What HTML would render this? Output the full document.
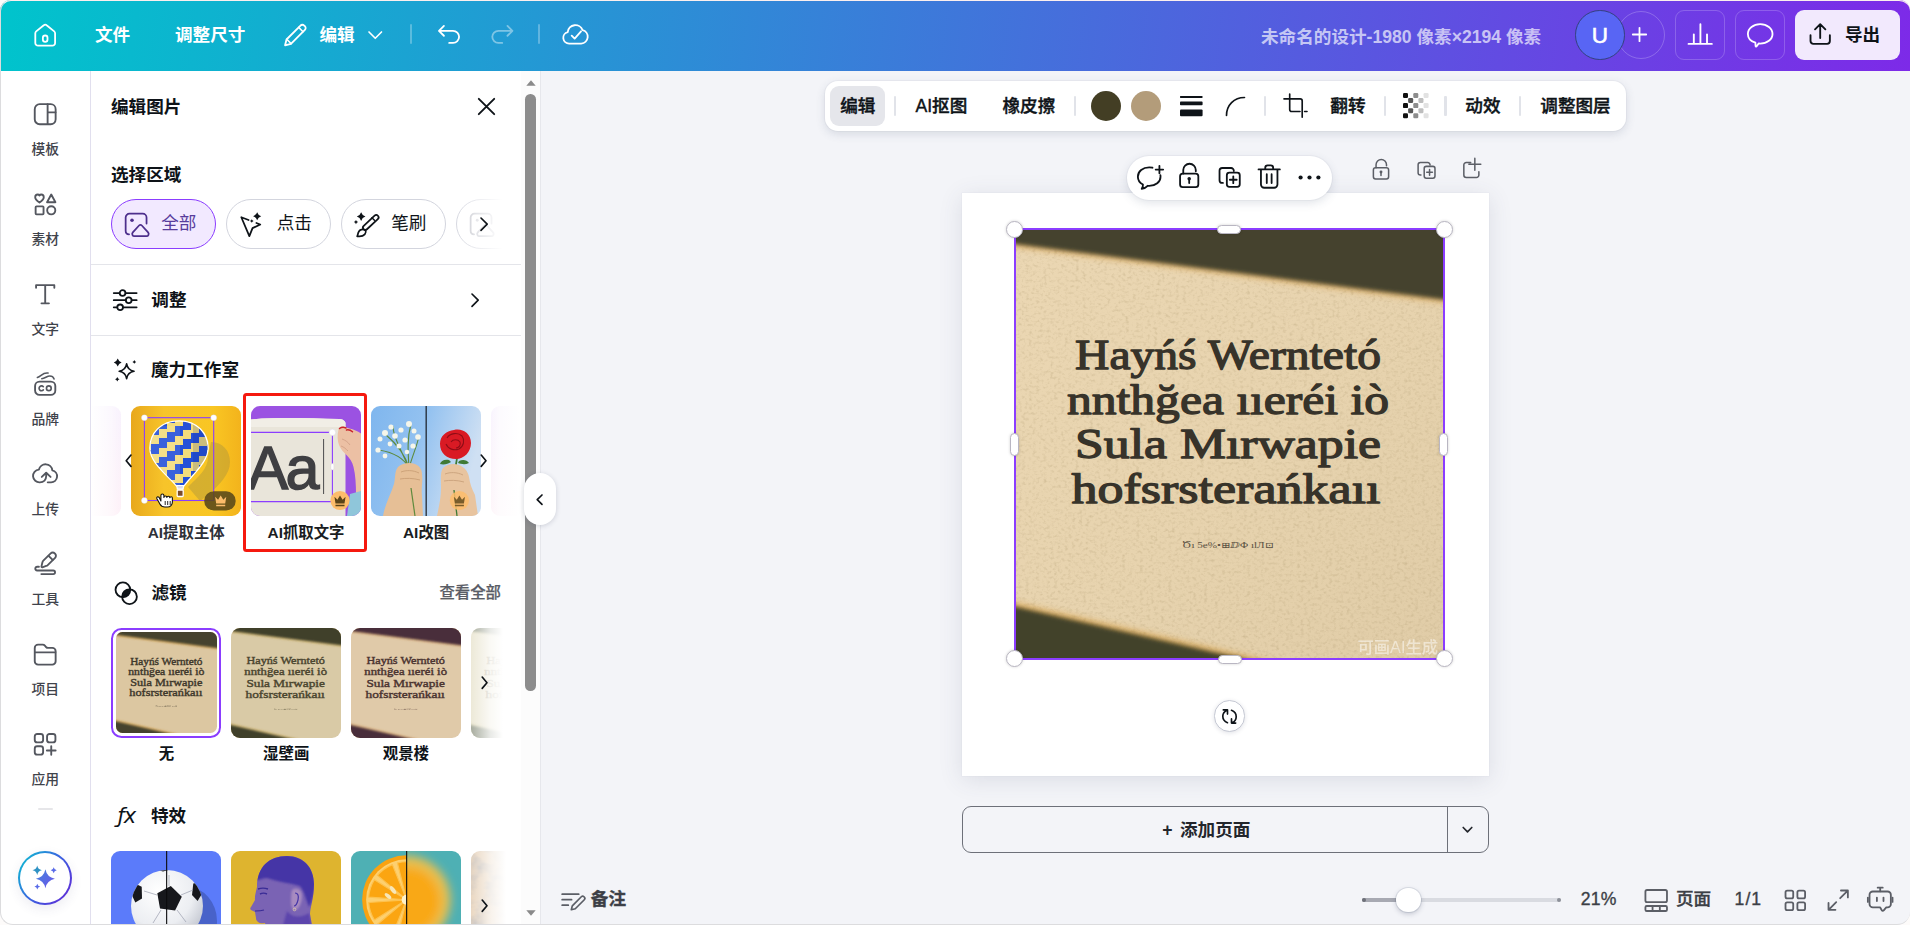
<!DOCTYPE html>
<html lang="zh-CN">
<head>
<meta charset="utf-8">
<title>未命名的设计 - 编辑图片</title>
<style>
*{box-sizing:border-box;margin:0;padding:0}
html,body{width:1910px;height:925px;overflow:hidden;background:#fbf7f6}
body{font-family:"Liberation Sans","Noto Sans CJK SC",sans-serif;color:#0e1318;position:relative}
.abs{position:absolute}
svg{display:block;overflow:visible}
#win{position:absolute;left:0;top:0;width:1910px;height:925px;overflow:hidden;background:#f3f4f8}
#winborder{z-index:10;position:absolute;left:0;top:0;width:1910px;height:925px;border-radius:11px 11px 13px 13px;border:1px solid #dcdcde;border-top-color:#fbefee;border-right:0;box-shadow:0 0 0 20px #fdfbfa;pointer-events:none}
/* header */
#hdr{z-index:3;position:absolute;left:0;top:0;width:1910px;height:70.5px;background:linear-gradient(97deg,#00c4cc 0%,#7d2ae8 100%)}
.ht{position:absolute;color:#fff;font-weight:700;font-size:17.6px;line-height:24px;white-space:nowrap;top:22.5px}
.hi{position:absolute;stroke:#fff;fill:none;stroke-width:1.65;stroke-linecap:round;stroke-linejoin:round}
.hdiv{position:absolute;top:24px;width:2px;height:20px;background:rgba(255,255,255,.28);border-radius:1px}
/* rail */
#rail{position:absolute;left:0;top:70.5px;width:90.5px;height:855px;background:#fff}
.rl{position:absolute;left:0;width:90.5px;text-align:center;font-size:13.8px;line-height:18px;color:#3f434b;font-weight:500}
.ri{position:absolute;stroke:#54575f;fill:none;stroke-width:1.7;stroke-linecap:round;stroke-linejoin:round}
/* panel */
#panel{position:absolute;left:90px;top:70px;width:432px;height:855px;background:#fff;border-left:1px solid #e1dfee;overflow:hidden}
#panel>*{margin-left:-91px;margin-top:-70px}
.pt{position:absolute;font-weight:700;font-size:17.6px;line-height:24px;white-space:nowrap;color:#0e1318}
.pi{position:absolute;stroke:#0e1318;fill:none;stroke-width:1.65;stroke-linecap:round;stroke-linejoin:round}
.hr{position:absolute;left:0;width:430px;height:1px;background:#e4e5ea}
.pill{position:absolute;top:199.25px;width:104.75px;height:49.5px;border-radius:25px;border:1.2px solid #d3d5de;background:#fff}
.pill span{position:absolute;left:49.5px;top:10.4px;font-size:17.6px;line-height:24px;color:#0e1318;white-space:nowrap}
.pill svg{position:absolute;left:12.3px;top:11.6px;stroke:#0e1318;fill:none;stroke-width:1.6;stroke-linecap:round;stroke-linejoin:round}
.card{position:absolute;width:110px;height:110px;border-radius:9px;overflow:hidden}
.cl{position:absolute;font-size:15.4px;font-weight:700;line-height:20px;text-align:center;width:130px;color:#1a1d22;white-space:nowrap}
/* scrollbar */
#sb{position:absolute;left:521px;top:70.5px;width:19.5px;height:855px;background:#fcfcfc;border-right:1px solid #e6e7ec}
/* canvas */
.tb{position:absolute;background:#fff;box-shadow:0 0 0 1px rgba(64,79,109,.04),0 3px 10px rgba(64,79,109,.16)}
.tt{position:absolute;font-size:17.6px;font-weight:500;line-height:24px;white-space:nowrap;color:#0e1318;top:13px;-webkit-text-stroke:.4px #0e1318}
.tdiv{position:absolute;top:15.3px;width:2.2px;height:19.5px;background:#e1e3e9;border-radius:1.1px;margin-left:-.4px}
.ti{position:absolute;stroke:#0e1318;fill:none;stroke-width:1.65;stroke-linecap:round;stroke-linejoin:round}
.gi{position:absolute;stroke:#5b5e66;fill:none;stroke-width:1.65;stroke-linecap:round;stroke-linejoin:round}
.hnd{position:absolute;width:17px;height:17px;border-radius:50%;background:#fff;border:1px solid #b9b6c2;box-shadow:0 0 3px rgba(0,0,0,.18)}
.hp{position:absolute;background:#fff;border:1px solid #b9b6c2;border-radius:5px;box-shadow:0 0 3px rgba(0,0,0,.18)}
.bt{position:absolute;font-size:17.6px;font-weight:500;line-height:24px;white-space:nowrap;color:#3c3f46;top:887.3px;-webkit-text-stroke:.35px #3c3f46}
</style>
</head>
<body>
<div id="win">
<!--HEADER-->
<div id="hdr">
<svg class="hi" style="left:31.8px;top:21.6px" width="26.4" height="26.4" viewBox="0 0 24 24"><path d="M3 10.2c0-.7.3-1.3.8-1.7l6.9-5.6a2 2 0 0 1 2.6 0l6.9 5.6c.5.4.8 1 .8 1.7V19a2.5 2.5 0 0 1-2.5 2.500h-13A2.500 2.500 0 0 1 3 19z"/><rect x="9.900" y="12.300" width="4.200" height="5.800" rx="2.100"/></svg>
<div class="ht" style="left:95px">文件</div>
<div class="ht" style="left:175px">调整尺寸</div>
<svg class="hi" style="left:282.2px;top:21.600px" width="26.4" height="26.4" viewBox="0 0 24 24"><path d="M2.800 21.200l1.300-5.300L16.800 3.200a2.400 2.400 0 0 1 3.400 0l.6.600a2.400 2.400 0 0 1 0 3.400L8.100 19.900z"/><path d="M4.300 15.700l4 4M15.200 4.900l3.900 3.900" stroke-width="1.400"/></svg>
<div class="ht" style="left:319.5px">编辑</div>
<svg class="hi" style="left:367.5px;top:31px" width="14.5" height="8.5" viewBox="0 0 14.5 8.5"><path d="M1 1l6.250 6.250L13.500 1"/></svg>
<div class="hdiv" style="left:410.2px"></div>
<svg class="hi" style="left:435.5px;top:21.500px" width="26.4" height="26.4" viewBox="0 0 24 24"><path d="M7.200 3.500L2.700 8l4.500 4.500M3 8h12.500a5.500 5.500 0 0 1 0 11H12"/></svg>
<svg class="hi" style="left:488.500px;top:21.500px;opacity:.42" width="26.4" height="26.4" viewBox="0 0 24 24"><path d="M16.800 3.500L21.300 8l-4.500 4.500M21 8H8.500a5.500 5.500 0 0 0 0 11H12"/></svg>
<div class="hdiv" style="left:537.8px"></div>
<svg class="hi" style="left:561.8px;top:21.300px" width="26.4" height="26.4" viewBox="0 0 24 24"><path d="M6.500 20.500a5.300 5.300 0 0 1-1.300-10.450A7 7 0 0 1 18.700 8.300 6.200 6.200 0 0 1 17.500 20.500z"/><path d="M8.800 13.300l2.700 2.700 5.800-6.600"/></svg>
<div class="ht" style="left:1261px;top:24.5px;color:rgba(255,255,255,.68)">未命名的设计-1980 像素×2194 像素</div>
<div class="abs" style="left:1616.800px;top:10.800px;width:48px;height:48px;border-radius:50%;border:1px solid rgba(255,255,255,.22)"></div>
<svg class="hi" style="left:1632.200px;top:27.300px" width="15" height="15" viewBox="0 0 15 15"><path d="M7.500 .8v13.400M.8 7.500h13.400" stroke-width="1.800"/></svg>
<div class="abs" style="left:1575px;top:10px;width:49.500px;height:49.500px;border-radius:50%;background:#5865f4;border:1px solid #33407e;color:#fff;font-size:22.500px;font-weight:400;-webkit-text-stroke:.55px #fff;line-height:49px;text-align:center">U</div>
<div class="abs" style="left:1675px;top:10px;width:50px;height:50px;border-radius:9px;border:1px solid rgba(255,255,255,.2)"></div>
<svg class="hi" style="left:1686.800px;top:21.800px" width="26.4" height="26.4" viewBox="0 0 24 24"><path d="M1.400 19.900h21.200M6.200 19.500V11.200M12.200 19.500V2M18.200 19.500V11.200" stroke-width="1.700"/></svg>
<div class="abs" style="left:1734.800px;top:10px;width:50px;height:50px;border-radius:9px;border:1px solid rgba(255,255,255,.2)"></div>
<svg class="hi" style="left:1747px;top:21.600px" width="26.4" height="26.4" viewBox="0 0 24 24"><path d="M12 2c6.200 0 11.200 3.900 11.200 8.800S18.200 19.600 12 19.600c-.5 0-.9 0-1.400-.1l-1.800 2.600c-.3.400-1 .3-1-.3L7.600 18.800C3.600 17.500.8 14.400.8 10.800.8 5.900 5.800 2 12 2z"/></svg>
<div class="abs" style="left:1795px;top:10px;width:105px;height:50px;border-radius:9px;background:#f2e9fd"></div>
<svg class="hi" style="left:1807px;top:21px;stroke:#0e1318" width="26.4" height="26.4" viewBox="0 0 24 24"><path d="M12 15.500V3.200M7.300 7.600L12 2.900l4.700 4.700M3.200 13v5.300a2.500 2.500 0 0 0 2.500 2.500h12.600a2.500 2.500 0 0 0 2.500-2.500V13" stroke-width="1.700"/></svg>
<div class="ht" style="left:1845px;color:#0e1318">导出</div>
</div>
<!--RAIL-->
<div id="rail">
<div class="rl" style="top:70.4px">模板</div>
<div class="rl" style="top:160.5px">素材</div>
<div class="rl" style="top:250.5px">文字</div>
<div class="rl" style="top:340.6px">品牌</div>
<div class="rl" style="top:430.6px">上传</div>
<div class="rl" style="top:520.7px">工具</div>
<div class="rl" style="top:610.8px">项目</div>
<div class="rl" style="top:700.8px">应用</div>

<svg class="ri" style="left:31.8px;top:30.05px" width="26.4" height="26.4" viewBox="0 0 24 24"><rect x="2.500" y="2.900" width="19" height="18.200" rx="4.500"/><path d="M14.200 3v18M14.200 10.300h7.200"/></svg>
<svg class="ri" style="left:31.8px;top:120.50px" width="26.4" height="26.4" viewBox="0 0 24 24"><path d="M6.800 10.500C4.500 8.900 2.900 7.500 2.900 5.600c0-1.400 1.100-2.400 2.300-2.400.7 0 1.300.4 1.600.9.300-.5.900-.9 1.600-.9 1.200 0 2.300 1 2.300 2.400 0 1.900-1.600 3.300-3.900 4.900z"/><path d="M17.500 3.200l3.800 7h-7.600z"/><rect x="3.300" y="14" width="7.200" height="7.200" rx=".8"/><circle cx="17.500" cy="17.600" r="3.700"/></svg>
<svg class="ri" style="left:31.8px;top:210.20px" width="26.4" height="26.4" viewBox="0 0 24 24"><path d="M3.700 6.200V3.800h16.600v2.400M12 3.800v16.400M8.600 20.300h6.800"/></svg>
<svg class="ri" style="left:31.8px;top:300.80px" width="26.4" height="26.4" viewBox="0 0 24 24"><rect x="2.800" y="9.700" width="18.400" height="12" rx="4"/><path d="M4.900 5.900C8.500 4.700 9.800 1.100 14.600 1.900M8.900 7c3-.4 4.800-2.500 7.300-2.500 2 0 3.400 1.300 3.900 2.700" stroke-width="1.400"/><path d="M10.300 14.300a2.200 2.200 0 1 0 0 2.900" stroke-width="1.500"/><circle cx="15.300" cy="15.700" r="2.150" stroke-width="1.500"/></svg>
<svg class="ri" style="left:31.800px;top:389.20px" width="26.4" height="26.4" viewBox="0 0 24 24"><path d="M14.300 20.300h3a5.500 5.500 0 0 0 1.200-10.870A6.200 6.200 0 0 0 6.300 8.700a5.800 5.800 0 0 0 .9 11.600c3.500 0 5.700-2.300 5.700-5.800v-2.500"/><path d="M8.900 15.400l4-3.800 4 3.800"/></svg>
<svg class="ri" style="left:31.8px;top:479.50px" width="26.400" height="26.400" viewBox="0 0 24 24"><path d="M9.400 15.700c-.5.100-.9-.3-.8-.8l.9-3.800a3 3 0 0 1 .8-1.400L17 3.100a2.600 2.600 0 0 1 3.700 0l.3.300a2.600 2.600 0 0 1 0 3.700l-6.700 6.600a3 3 0 0 1-1.400.800z"/><path d="M15.100 5.300l3.700 3.700"/><path d="M6.300 15.200H4.700a1.700 1.700 0 0 0 0 3.400h14.600a1.650 1.650 0 0 1 0 3.300H8.500"/></svg>
<svg class="ri" style="left:31.8px;top:570.20px" width="26.400" height="26.400" viewBox="0 0 24 24"><path d="M2.500 6.300a3 3 0 0 1 3-3h4.200c.8 0 1.500.3 2 .9l1.300 1.500c.4.400.9.600 1.400.600H18.500a3 3 0 0 1 3 3v9.200a3 3 0 0 1-3 3h-13a3 3 0 0 1-3-3z"/><path d="M2.800 10.300h18.400"/></svg>
<svg class="ri" style="left:31.8px;top:660.90px" width="26.400" height="26.400" viewBox="0 0 24 24"><rect x="2.500" y="2.700" width="7.600" height="7.600" rx="2.200"/><rect x="13.700" y="2.700" width="7.600" height="7.600" rx="2.200"/><rect x="2.500" y="13.900" width="7.600" height="7.600" rx="2.200"/><path d="M17.500 13.700v8M13.500 17.700h8"/></svg>
<div class="abs" style="left:38px;top:737.00px;width:14.800px;height:2.600px;border-radius:1.300px;background:#e6e6e9"></div>
<div class="abs" style="left:18.200px;top:780.40px;width:54px;height:54px;border-radius:50%;background:linear-gradient(125deg,#0fb8d2 8%,#3a62e0 50%,#6228d6 95%);box-shadow:0 4px 12px rgba(60,60,110,.09)"><div class="abs" style="left:1.900px;top:1.900px;width:50.200px;height:50.200px;border-radius:50%;background:#fff"></div>
<svg class="abs" style="left:0;top:0" width="54" height="54" viewBox="0 0 54 54"><defs><linearGradient id="mg" x1="0" y1="0" x2="1" y2="1"><stop offset="0" stop-color="#3f86dc"/><stop offset="1" stop-color="#6f52ea"/></linearGradient></defs><path fill="url(#mg)" d="M27.4 18.20Q28.92 26.18 36.90 27.7Q28.92 29.22 27.4 37.20Q25.88 29.22 17.90 27.7Q25.88 26.18 27.4 18.20z"/><path fill="#2f92c4" d="M19.2 14.60Q19.95 18.55 23.90 19.3Q19.95 20.05 19.2 24.00Q18.45 20.05 14.50 19.3Q18.45 18.55 19.2 14.60z"/><path fill="#5a6ce8" d="M35.7 16.30Q36.18 18.82 38.70 19.3Q36.18 19.78 35.7 22.30Q35.22 19.78 32.70 19.3Q35.22 18.82 35.7 16.30zM19.3 32.70Q19.76 35.14 22.20 35.6Q19.76 36.06 19.3 38.50Q18.84 36.06 16.40 35.6Q18.84 35.14 19.3 32.70z"/></svg></div>
</div>
<!--PANEL-->
<div id="panel">
<div class="pt" style="left:111px;top:95.100px">编辑图片</div>
<svg class="pi" style="left:477.5px;top:97.500px" width="17" height="17" viewBox="0 0 17 17"><path d="M.8.800l15.400 15.400M16.200.800L.800 16.200" stroke-width="1.900"/></svg>
<div class="pt" style="left:111px;top:162.600px">选择区域</div>
<div class="pill" style="left:110.75px;background:#f2e9ff;border:1.4px solid #8b3dff"><svg width="26.4" height="26.4" viewBox="0 0 24 24" style="stroke:#4d2f8c"><path d="M4.600 20.400A3.400 3.400 0 0 1 1.500 17V5a3.500 3.500 0 0 1 3.500-3.500h12A3.500 3.500 0 0 1 20.500 5v5.500"/><circle cx="7.300" cy="7.400" r="1.600" fill="#4d2f8c" stroke="none"/><path d="M13.700 12.300a1.700 1.700 0 0 1 2.500 0l5.700 6.200a2.100 2.100 0 0 1-1.500 3.500H9.500A2.100 2.100 0 0 1 8 18.500z"/></svg><span style="color:#583c9c">全部</span></div>
<div class="pill" style="left:226.25px"><svg width="26.4" height="26.4" viewBox="0 0 24 24"><path d="M7.800 7.300L1.200 4.800 8.500 22l2.900-7.300 7-3.300-3.500-1.400"/><path d="M15.6 0.13Q16.48 2.92 19.27 3.8Q16.48 4.68 15.6 7.47Q14.72 4.68 11.93 3.8Q14.72 2.92 15.6 0.13zM10.7 6.58Q11.09 7.81 12.32 8.2Q11.09 8.59 10.7 9.82Q10.31 8.59 9.08 8.2Q10.31 7.81 10.7 6.58z" fill="#0e1318" stroke="none"/></svg><span>点击</span></div>
<div class="pill" style="left:340.75px"><svg width="26.4" height="26.4" viewBox="0 0 24 24"><rect x="13.100" y=".6" width="4.300" height="17.800" rx="2.150" transform="rotate(47 15.250 9.500)"/><path d="M16.300 5.200l2.300 2.400" stroke-width="1.300"/><path d="M8.300 15.700c-2.300 0-3.900 1.200-4.500 3.400-.3 1.200-.5 2.200-.9 3 2.600.4 5.400 0 6.900-1.700 1.100-1.300 1.200-2.600.7-3.600z"/><path d="M6.5 0.31Q7.43 3.27 10.39 4.2Q7.43 5.13 6.5 8.09Q5.57 5.13 2.61 4.2Q5.57 3.27 6.5 0.31zM1.8 7.26Q2.27 8.73 3.74 9.2Q2.27 9.67 1.8 11.14Q1.33 9.67 -0.14 9.2Q1.33 8.73 1.8 7.26z" fill="#0e1318" stroke="none"/></svg><span>笔刷</span></div>
<div class="pill" style="left:455.75px"><svg width="26.4" height="26.4" viewBox="0 0 24 24" style="stroke:#bfc1c9"><path d="M4.600 20.400A3.400 3.400 0 0 1 1.500 17V5a3.500 3.500 0 0 1 3.500-3.500h12A3.500 3.500 0 0 1 20.500 5v5.500"/><circle cx="7.500" cy="7.500" r="1.300" fill="#c9cad1" stroke="none"/><path d="M13.700 12.300a1.700 1.700 0 0 1 2.500 0l5.700 6.200a2.100 2.100 0 0 1-1.500 3.500H9.500A2.100 2.100 0 0 1 8 18.500z"/></svg></div>
<div class="abs" style="left:452px;top:195px;width:70px;height:58px;background:linear-gradient(90deg,rgba(255,255,255,0) 0,rgba(255,255,255,.55) 35%,#fff 72%)"></div>
<svg class="pi" style="left:479.800px;top:216.800px" width="8.2" height="14.4" viewBox="0 0 8.2 14.4" stroke-width="1.900"><path d="M1 1l6.200 6.200L1 13.400"/></svg>
<div class="hr" style="left:91px;top:264px"></div>
<svg class="pi" style="left:112.300px;top:286.800px" width="26.4" height="26.4" viewBox="0 0 24 24"><path d="M1.600 5.500h5.200M12.400 5.500h10M1.600 12h10.800M18 12h4.400M1.600 18.500h3M10.200 18.500h12.200"/><circle cx="9.600" cy="5.500" r="2.600"/><circle cx="15.200" cy="12" r="2.600"/><circle cx="7.400" cy="18.500" r="2.600"/></svg>
<div class="pt" style="left:151.300px;top:287.800px">调整</div>
<svg class="pi" style="left:471.300px;top:293.400px" width="8.2" height="14.4" viewBox="0 0 8.2 14.4" stroke-width="1.800"><path d="M1 1l6.200 6.200L1 13.400"/></svg>
<div class="hr" style="left:91px;top:334.700px"></div>
<svg class="pi" style="left:112.300px;top:357.300px" width="26.4" height="26.4" viewBox="0 0 24 24"><path d="M13.300 6.300c.7 4.300 2.400 6 6.700 6.700-4.300.7-6 2.400-6.700 6.700-.7-4.300-2.400-6-6.700-6.700 4.300-.7 6-2.400 6.700-6.700z" stroke-width="1.500"/><path d="M5.2 1.44Q6.06 4.14 8.76 5Q6.06 5.86 5.2 8.56Q4.34 5.86 1.64 5Q4.34 4.14 5.2 1.44zM20.3 2.77Q20.71 4.09 22.03 4.5Q20.71 4.91 20.3 6.23Q19.89 4.91 18.57 4.5Q19.89 4.09 20.3 2.77zM4.8 18.25Q5.29 19.81 6.85 20.3Q5.29 20.79 4.8 22.35Q4.31 20.79 2.75 20.3Q4.31 19.81 4.8 18.25z" fill="#0e1318" stroke="none"/></svg>
<div class="pt" style="left:151px;top:358.300px">魔力工作室</div>
<!--MAGIC0--><div class="abs" style="left:91px;top:405.900px;width:30px;height:110px;border-radius:0 9px 9px 0;background:linear-gradient(180deg,#f7effd,#fdeef6)"></div>
<div class="abs" style="left:491.400px;top:405.900px;width:31px;height:110px;border-radius:9px 0 0 9px;background:linear-gradient(180deg,#f7f1fd,#fdf3f8)"></div>
<svg class="card" style="left:131.200px;top:405.900px" width="110" height="110" viewBox="0 0 110 110">
<defs><linearGradient id="yg" x1="0" y1="0" x2="1" y2="0"><stop offset="0" stop-color="#e8a81c"/><stop offset=".3" stop-color="#f7c42a"/><stop offset=".75" stop-color="#f9c623"/><stop offset="1" stop-color="#f3b31c"/></linearGradient></defs>
<rect width="110" height="110" fill="url(#yg)"/>
<path d="M80 36c12 0 19 9 19 20 0 12-10 22-22 33l-8 6-12-14c10-10 20-18 20-30z" fill="#a8923f" opacity=".42"/>
<rect x="13.400" y="11.700" width="69.300" height="82.800" fill="none" stroke="#8b3dff" stroke-width="1.100"/>
<clipPath id="bc"><path d="M48 15.500C30 15.500 19.500 28 19.500 42c0 13 14 24 26.500 37.500h6.500C63 66 76.500 55 76.500 42 76.500 28 66 15.500 48 15.500z"/></clipPath><path d="M48 15.500C30 15.500 19.500 28 19.500 42c0 13 14 24 26.500 37.500h6.500C63 66 76.500 55 76.500 42 76.500 28 66 15.500 48 15.500z" fill="#fff" stroke="#fff" stroke-width="2.600" stroke-linejoin="round"/><g clip-path="url(#bc)"><rect x="15" y="10" width="66" height="75" fill="#f3dc7c"/><path d="M12 6h8v-6h8v-6h8v-6h8v-6h8v-6h8v-6h8v-6h8v-6h8v-6v10v6h-8v6h-8v6h-8v6h-8v6h-8v6h-8v6h-8v6h-8v6h-8z" fill="#2450d8"/><path d="M12 25h8v-6h8v-6h8v-6h8v-6h8v-6h8v-6h8v-6h8v-6h8v-6v10v6h-8v6h-8v6h-8v6h-8v6h-8v6h-8v6h-8v6h-8v6h-8z" fill="#2450d8"/><path d="M12 44h8v-6h8v-6h8v-6h8v-6h8v-6h8v-6h8v-6h8v-6h8v-6v10v6h-8v6h-8v6h-8v6h-8v6h-8v6h-8v6h-8v6h-8v6h-8z" fill="#2450d8"/><path d="M12 63h8v-6h8v-6h8v-6h8v-6h8v-6h8v-6h8v-6h8v-6h8v-6v10v6h-8v6h-8v6h-8v6h-8v6h-8v6h-8v6h-8v6h-8v6h-8z" fill="#2450d8"/><path d="M12 82h8v-6h8v-6h8v-6h8v-6h8v-6h8v-6h8v-6h8v-6h8v-6v10v6h-8v6h-8v6h-8v6h-8v6h-8v6h-8v6h-8v6h-8v6h-8z" fill="#2450d8"/><path d="M12 101h8v-6h8v-6h8v-6h8v-6h8v-6h8v-6h8v-6h8v-6h8v-6v10v6h-8v6h-8v6h-8v6h-8v6h-8v6h-8v6h-8v6h-8v6h-8z" fill="#2450d8"/><path d="M12 120h8v-6h8v-6h8v-6h8v-6h8v-6h8v-6h8v-6h8v-6h8v-6v10v6h-8v6h-8v6h-8v6h-8v6h-8v6h-8v6h-8v6h-8v6h-8z" fill="#2450d8"/><path d="M12 139h8v-6h8v-6h8v-6h8v-6h8v-6h8v-6h8v-6h8v-6h8v-6v10v6h-8v6h-8v6h-8v6h-8v6h-8v6h-8v6h-8v6h-8v6h-8z" fill="#2450d8"/><path d="M19 20h30v65H19z" fill="#fff" opacity=".10"/><path d="M62 15h20v70H62z" fill="#102a80" opacity=".18"/></g><path d="M45.800 79.500h6.800l-.5 3.500h-5.800z" fill="#d9dbe8" stroke="#fff" stroke-width="1.200"/><rect x="46.200" y="84" width="6" height="6.500" rx=".8" fill="#7a4b2a" stroke="#fff" stroke-width="1.300"/>
<g fill="#fff" stroke="#c9c3d6" stroke-width=".3"><circle cx="13.400" cy="11.700" r="3"/><circle cx="82.700" cy="11.700" r="3"/><circle cx="13.400" cy="94.500" r="3"/></g>
<rect x="73.200" y="85.300" width="31.500" height="19.200" rx="9.600" fill="#59481a" opacity=".88"/>
<path transform="translate(89.700 94.300) scale(1.050)" d="M-5.300 -3.300L-2.500 -.6 0 -4.600 2.500 -.6 5.300 -3.300 4.300 3H-4.300zM-4.300 4.200H4.300V5.600H-4.300z" fill="#fdbd6b"/>
<g transform="translate(34.700 93.500)"><path d="M-6.500 -2c-1.500-1.500-3-.5-2.300 1.200l3 5.300c1 2 2.800 3 5 3h2.500c3 0 5-2 5-5V-1.500c0-1.600-2.300-1.800-2.600-.2 0-2-2.700-2.200-2.900-.3 0-2.100-2.900-2.100-3 0V-4c0-2-3-2-3 0V1.500z" fill="#fff" stroke="#111" stroke-width="1.100" stroke-linejoin="round"/><path d="M-.5 1.500v4M2 1.500v4M4.500 1.500v4" stroke="#111" stroke-width=".9" fill="none"/></g>
</svg>
<svg class="card" style="left:251px;top:405.900px" width="110" height="110" viewBox="0 0 110 110">
<rect width="110" height="110" fill="#9b52e2"/>
<path d="M0 13.500C25 11 60 12.500 88 13c3 0 6 1.500 6.500 4V110H0z" fill="#e9e5da"/>
<path d="M0 13.500C25 11 60 12.500 88 13c3 0 6 1.500 6.500 4v4H0z" fill="#f1eee6"/>
<text x="-3.500" y="82.500" font-family="'Liberation Sans',sans-serif" font-size="61" letter-spacing="-2.800" fill="#3f3f42" stroke="#3f3f42" stroke-width="1.500">Aa</text>
<path d="M72.600 33V88" stroke="#4a4a4c" stroke-width="1"/>
<path d="M0 26.400H81.400V95.600H0" fill="none" stroke="#8b3dff" stroke-width="1.100"/>
<path d="M87.500 23.500c1-3 4-3.500 6-2.500l5 1.500c4 1 8 2.500 11.500 5V90l-5-1c0-10-.5-20-2.500-28-1-5-4-9-7-12-3-3-6-6-7.500-10-1.500-4-2-10-.5-15.500z" fill="#ecc0a4"/>
<path d="M91 33c3 1 6 3 8 6M90 40c3 1 5 3 7 5" stroke="#cf9d84" stroke-width=".8" fill="none"/>
<path d="M88.500 22.500c2-1.500 4.500-1.500 6.500-.5M95.500 24c2.500-.5 4.500.5 6 1.800" stroke="#c9242c" stroke-width="1.500" fill="none" stroke-linecap="round"/>
<path d="M99 88l11-3v25H96z" fill="#8fc6da"/>
<circle cx="81.400" cy="26.400" r="3.300" fill="#fff" stroke="#cfcbd8" stroke-width=".4"/>
<rect x="80" y="57.500" width="2.800" height="6.500" rx="1.400" fill="#fff" stroke="#cfcbd8" stroke-width=".3"/>
<circle cx="89" cy="94.500" r="9.600" fill="#fdbd6b"/>
<path transform="translate(89 94.300) scale(1.050)" d="M-5.300 -3.300L-2.500 -.6 0 -4.600 2.500 -.6 5.300 -3.300 4.300 3H-4.300zM-4.300 4.200H4.300V5.600H-4.300z" fill="#5a4418"/>
</svg>
<svg class="card" style="left:371.100px;top:405.900px" width="110" height="110" viewBox="0 0 110 110">
<defs><linearGradient id="sky" x1="0" y1="0" x2="1" y2=".3"><stop offset="0" stop-color="#7fb6ee"/><stop offset=".5" stop-color="#94c2f0"/><stop offset="1" stop-color="#cfe0f3"/></linearGradient>
<filter id="fb1"><feGaussianBlur stdDeviation=".7"/></filter></defs>
<rect width="110" height="110" fill="url(#sky)"/>
<g stroke="#5d8a3c" stroke-width="1.100" fill="none"><path d="M38 62C34 48 26 38 14 28M38 62C37 46 36 32 40 18M38 62C32 50 20 46 8 44M38 62C42 48 46 40 48 30M38 62C30 44 22 30 22 20"/></g>
<g fill="#f6f6ea" filter="url(#fb1)"><circle cx="14" cy="27" r="3"/><circle cx="9" cy="33" r="2.500"/><circle cx="20" cy="21" r="2.600"/><circle cx="24" cy="30" r="2.800"/><circle cx="7" cy="44" r="2.600"/><circle cx="14" cy="50" r="2.400"/><circle cx="30" cy="24" r="2.600"/><circle cx="38" cy="18" r="3"/><circle cx="43" cy="25" r="2.500"/><circle cx="47" cy="31" r="2.800"/><circle cx="34" cy="34" r="2.600"/><circle cx="28" cy="40" r="2.500"/><circle cx="42" cy="40" r="2.600"/><circle cx="19" cy="38" r="2.400"/><circle cx="36" cy="46" r="2.300"/></g>
<path d="M27 61c4-4 12-5 17-3 4 1.500 7 5 7 10 1 8-1 14 0 22l1 20H12c2-12 8-22 11-32 1.500-6 .5-13 4-17z" fill="#e6bf96"/>
<path d="M30 66c5-2 12-2 18 1M29 73c6-1 13-1 20 1" stroke="#c99f76" stroke-width=".9" fill="none"/>
<path d="M40 82l4 28" stroke="#5d8a3c" stroke-width="1.200"/>
<path d="M86 52c-1 8-3 14-3 24" stroke="#3f7a35" stroke-width="1.800" fill="none"/>
<path d="M78 54c-5-1-8 1-9 4 4 1 8 0 11-2zM88 55c4-2 8-1 10 2-4 2-8 1-11 0z" fill="#3f7a35"/>
<path d="M83 24c8-2 17 3 17 13 0 9-7 16-15 16-9 0-16-6-16-15 0-8 6-13 14-14z" fill="#d91a24"/>
<path d="M76 32c3-5 11-6 15-2 3 4 2 10-3 13-5 2-11 0-13-5M80 36c2-3 7-3 9 0 1 3-1 6-4 6" stroke="#8f0d16" stroke-width="1.100" fill="none"/>
<path d="M72 62c4-4 11-5 16-3 5 2 9 6 10 12 1 7 3 12 6 18l3 21H66c2-10 4-18 4-28 0-7-1-16 2-20z" fill="#e8c49f"/>
<path d="M74 68c5-2 12-2 18 1M73 75c6-1 13-1 20 1" stroke="#c9a27c" stroke-width=".9" fill="none"/>
<path d="M83 84l3 26" stroke="#3f7a35" stroke-width="1.300"/>
<rect x="54.600" y="0" width="1.100" height="110" fill="#0b0b0d"/>
<circle cx="88.400" cy="94.500" r="9.600" fill="#fdbd6b" opacity=".85"/>
<path transform="translate(88.400 94.300) scale(1.050)" d="M-5.300 -3.300L-2.500 -.6 0 -4.600 2.500 -.6 5.300 -3.300 4.300 3H-4.300zM-4.300 4.200H4.300V5.600H-4.300z" fill="#6a5223" opacity=".9"/>
</svg>
<div class="abs" style="left:91px;top:400px;width:34px;height:122px;background:linear-gradient(90deg,#fff 0,rgba(255,255,255,.55) 60%,rgba(255,255,255,0) 100%)"></div>
<div class="abs" style="left:487px;top:400px;width:36px;height:122px;background:linear-gradient(90deg,rgba(255,255,255,0) 0,rgba(255,255,255,.7) 35%,#fff 90%)"></div>
<svg class="pi" style="left:125.3px;top:454.2px" width="7.200" height="13.400" viewBox="0 0 7.200 13.400" stroke-width="1.900"><path d="M6 1L1.200 6.700 6 12.400"/></svg>
<svg class="pi" style="left:480.3px;top:454.2px" width="7.200" height="13.400" viewBox="0 0 7.200 13.400" stroke-width="1.900"><path d="M1.200 1L6 6.700 1.200 12.400"/></svg>
<div class="cl" style="left:121.200px;top:522.600px;color:#2e3138">AI提取主体</div>
<div class="cl" style="left:241px;top:522.600px">AI抓取文字</div>
<div class="cl" style="left:361.100px;top:522.600px">AI改图</div>
<div class="abs" style="left:243.300px;top:393.300px;width:123.500px;height:158.500px;border:3.200px solid #f5190f;border-radius:3.500px"></div>
<!--MAGIC1-->
<!--FILTER0--><svg class="pi" style="left:112.800px;top:580px" width="26.400" height="26.400" viewBox="0 0 24 24" stroke-width="1.700"><circle cx="9" cy="8.900" r="6.700"/><circle cx="15" cy="15.200" r="6.700"/><path d="M9 15.600a6.700 6.700 0 0 1 6-6.700 6.700 6.700 0 0 1-6 6.700z" fill="#0e1318" stroke-width="1"/></svg>
<div class="pt" style="left:151.500px;top:581.200px">滤镜</div>
<div class="abs" style="left:421px;top:583.400px;width:80px;text-align:right;font-size:15.400px;font-weight:500;line-height:20px;color:#5a5d66;white-space:nowrap;-webkit-text-stroke:.25px #5a5d66">查看全部</div>
<div class="abs" style="left:111.400px;top:627.900px;width:110px;height:110px;border-radius:10.500px;border:2.200px solid #8b3dff;background:#fff"></div>
<svg class="abs" style="left:115.8px;top:632.3px;border-radius:6.5px;overflow:hidden" width="101.2" height="101.2" viewBox="0 0 428.500 428.500">
<defs><filter id="tb1" x="-10%" y="-10%" width="120%" height="120%"><feGaussianBlur stdDeviation="5"/></filter></defs>
<rect width="428.500" height="428.500" fill="#dcc7a1"/>
<path d="M-30 14L460 77V-40H-30z" fill="#d39838" opacity=".6" filter="url(#tb1)"/>
<path d="M-30 365L270 434 -30 470z" fill="#d39838" opacity=".6" filter="url(#tb1)"/>
<path d="M-30 8.100L460 71.600V-40H-30z" fill="#45432e" filter="url(#tb1)"/>
<path d="M-30 371.600L260 438.400 240 470H-30z" fill="#45432e" filter="url(#tb1)"/>
<g font-family="'Liberation Serif','DejaVu Serif',serif" font-weight="400" font-size="42.800" fill="#3d372b" stroke="#3d372b" stroke-width="1.600" text-anchor="middle">
<text x="213" y="138.500" textLength="306" lengthAdjust="spacingAndGlyphs">Hayńś Werntetó</text>
<text x="213" y="183.500" textLength="322" lengthAdjust="spacingAndGlyphs">nnthğea ııeréi iò</text>
<text x="213" y="228" textLength="306" lengthAdjust="spacingAndGlyphs">Sula Mırwapie</text>
<text x="211" y="272.500" textLength="309" lengthAdjust="spacingAndGlyphs">hofsrsterańkaıı</text>
<text x="213" y="318.300" font-size="8.500" font-weight="400" stroke="none" textLength="92" lengthAdjust="spacingAndGlyphs" opacity=".7">Ծı 5e%•⊞ⅅΦ ılЛ⊡</text>
</g>
</svg>
<svg class="abs" style="left:231.2px;top:627.9px;border-radius:9px;overflow:hidden" width="110" height="110" viewBox="0 0 428.500 428.500">
<defs><filter id="tb2" x="-10%" y="-10%" width="120%" height="120%"><feGaussianBlur stdDeviation="5"/></filter></defs>
<rect width="428.500" height="428.500" fill="#d9caa6"/>
<path d="M-30 14L460 77V-40H-30z" fill="#c9a95a" opacity=".6" filter="url(#tb2)"/>
<path d="M-30 365L270 434 -30 470z" fill="#c9a95a" opacity=".6" filter="url(#tb2)"/>
<path d="M-30 8.100L460 71.600V-40H-30z" fill="#3f4029" filter="url(#tb2)"/>
<path d="M-30 371.600L260 438.400 240 470H-30z" fill="#3f4029" filter="url(#tb2)"/>
<g font-family="'Liberation Serif','DejaVu Serif',serif" font-weight="400" font-size="42.800" fill="#4a452f" stroke="#4a452f" stroke-width="1.600" text-anchor="middle">
<text x="213" y="138.500" textLength="306" lengthAdjust="spacingAndGlyphs">Hayńś Werntetó</text>
<text x="213" y="183.500" textLength="322" lengthAdjust="spacingAndGlyphs">nnthğea ııeréi iò</text>
<text x="213" y="228" textLength="306" lengthAdjust="spacingAndGlyphs">Sula Mırwapie</text>
<text x="211" y="272.500" textLength="309" lengthAdjust="spacingAndGlyphs">hofsrsterańkaıı</text>
<text x="213" y="318.300" font-size="8.500" font-weight="400" stroke="none" textLength="92" lengthAdjust="spacingAndGlyphs" opacity=".7">Ծı 5e%•⊞ⅅΦ ılЛ⊡</text>
</g>
</svg>
<svg class="abs" style="left:350.9px;top:627.9px;border-radius:9px;overflow:hidden" width="110" height="110" viewBox="0 0 428.500 428.500">
<defs><filter id="tb3" x="-10%" y="-10%" width="120%" height="120%"><feGaussianBlur stdDeviation="5"/></filter></defs>
<rect width="428.500" height="428.500" fill="#e0caa9"/>
<path d="M-30 14L460 77V-40H-30z" fill="#d3a468" opacity=".6" filter="url(#tb3)"/>
<path d="M-30 365L270 434 -30 470z" fill="#d3a468" opacity=".6" filter="url(#tb3)"/>
<path d="M-30 8.100L460 71.600V-40H-30z" fill="#4a2d3b" filter="url(#tb3)"/>
<path d="M-30 371.600L260 438.400 240 470H-30z" fill="#4a2d3b" filter="url(#tb3)"/>
<g font-family="'Liberation Serif','DejaVu Serif',serif" font-weight="400" font-size="42.800" fill="#4a3330" stroke="#4a3330" stroke-width="1.600" text-anchor="middle">
<text x="213" y="138.500" textLength="306" lengthAdjust="spacingAndGlyphs">Hayńś Werntetó</text>
<text x="213" y="183.500" textLength="322" lengthAdjust="spacingAndGlyphs">nnthğea ııeréi iò</text>
<text x="213" y="228" textLength="306" lengthAdjust="spacingAndGlyphs">Sula Mırwapie</text>
<text x="211" y="272.500" textLength="309" lengthAdjust="spacingAndGlyphs">hofsrsterańkaıı</text>
<text x="213" y="318.300" font-size="8.500" font-weight="400" stroke="none" textLength="92" lengthAdjust="spacingAndGlyphs" opacity=".7">Ծı 5e%•⊞ⅅΦ ılЛ⊡</text>
</g>
</svg>
<svg class="abs" style="left:471.2px;top:627.9px;border-radius:9px;overflow:hidden" width="110" height="110" viewBox="0 0 428.500 428.500">
<defs><filter id="tb4" x="-10%" y="-10%" width="120%" height="120%"><feGaussianBlur stdDeviation="5"/></filter></defs>
<rect width="428.500" height="428.500" fill="#ece8d6"/>
<path d="M-30 14L460 77V-40H-30z" fill="#e0dcc0" opacity=".6" filter="url(#tb4)"/>
<path d="M-30 365L270 434 -30 470z" fill="#e0dcc0" opacity=".6" filter="url(#tb4)"/>
<path d="M-30 8.100L460 71.600V-40H-30z" fill="#a4a99b" filter="url(#tb4)"/>
<path d="M-30 371.600L260 438.400 240 470H-30z" fill="#a4a99b" filter="url(#tb4)"/>
<g font-family="'Liberation Serif','DejaVu Serif',serif" font-weight="400" font-size="42.800" fill="#b9b4a0" stroke="#b9b4a0" stroke-width="1.600" text-anchor="middle">
<text x="213" y="138.500" textLength="306" lengthAdjust="spacingAndGlyphs">Hayńś Werntetó</text>
<text x="213" y="183.500" textLength="322" lengthAdjust="spacingAndGlyphs">nnthğea ııeréi iò</text>
<text x="213" y="228" textLength="306" lengthAdjust="spacingAndGlyphs">Sula Mırwapie</text>
<text x="211" y="272.500" textLength="309" lengthAdjust="spacingAndGlyphs">hofsrsterańkaıı</text>
<text x="213" y="318.300" font-size="8.500" font-weight="400" stroke="none" textLength="92" lengthAdjust="spacingAndGlyphs" opacity=".7">Ծı 5e%•⊞ⅅΦ ılЛ⊡</text>
</g>
</svg>
<div class="abs" style="left:470px;top:622px;width:53px;height:122px;background:linear-gradient(90deg,rgba(255,255,255,0) 0,rgba(255,255,255,.75) 38%,#fff 62%)"></div>
<svg class="pi" style="left:480.6px;top:676.1px" width="7.200" height="13.400" viewBox="0 0 7.200 13.400" stroke-width="1.900"><path d="M1.200 1L6 6.700 1.200 12.400"/></svg>
<div class="cl" style="left:101.400px;top:744.300px;color:#0e1318">无</div>
<div class="cl" style="left:221.200px;top:744.300px;color:#0e1318">湿壁画</div>
<div class="cl" style="left:340.900px;top:744.300px;color:#0e1318">观景楼</div>
<!--FILTER1-->
<!--FX0--><div class="abs" style="left:117.500px;top:800.800px;font-family:'DejaVu Sans','Liberation Sans',sans-serif;font-style:italic;font-size:21px;line-height:30px;letter-spacing:-1.200px;color:#0e1318;white-space:nowrap">ƒx</div>
<div class="pt" style="left:151px;top:803.600px">特效</div>
<svg class="card" style="left:111px;top:851.100px;border-radius:9px 9px 0 0;height:80px" width="110" height="80" viewBox="0 0 110 80">
<defs><radialGradient id="bg1" cx=".38" cy=".3" r=".8"><stop offset="0" stop-color="#fff"/><stop offset=".6" stop-color="#eceef2"/><stop offset="1" stop-color="#b9bdc8"/></radialGradient><clipPath id="bcl"><circle cx="56" cy="55" r="36"/></clipPath></defs>
<rect width="110" height="80" fill="#5b7bfa"/>
<ellipse cx="76" cy="70" rx="30" ry="34" fill="#4862c9"/>
<circle cx="56" cy="55" r="36" fill="url(#bg1)"/>
<g clip-path="url(#bcl)" fill="#17181c">
<path d="M59.8 35.1L70.8 45.7L64.1 59.5L49.0 57.4L46.3 42.3z"/>
<path d="M23.9 32.6L30.7 35.8L31.0 47.6L24.3 51.6L20.0 42.3z"/>
<path d="M88.8 31.3L91.4 42.1L86.6 49.9L81.0 44.1L82.3 32.6z"/>
<path d="M40.0 93.6L28.6 87.0L32.9 76.2L47.1 76.2L51.4 87.0z"/>
<path d="M78.1 91.5L69.3 83.3L75.3 73.4L87.8 75.3L89.5 86.5z"/>
<path d="M52.0 20.6L43.4 18.1L46.7 14.1L57.3 14.1L60.6 18.1z"/>
</g>
<g clip-path="url(#bcl)" stroke="#9a9ead" stroke-width=".7" fill="none"><path d="M58 35V24M70 44l12-5M66 59l9 12M50 59l-8 13M46 44l-13-4"/></g>
<rect x="55.100" y="0" width="1.100" height="80" fill="#0b0b0d"/>
</svg>
<svg class="card" style="left:231.300px;top:851.100px;border-radius:9px 9px 0 0;height:80px" width="110" height="80" viewBox="0 0 110 80">
<defs><filter id="mb"><feGaussianBlur stdDeviation="1.200"/></filter><clipPath id="hc"><path d="M26 36c0-20 12-31 30-31 17 0 27 12 27 28 0 14-4 24-4 30l3 17H36l-2-8c-5 1-9-1-9-5l-1-6-4-2c-1-1-1-2 0-3l4-7c-.5-4 1-8 2-13z"/></clipPath></defs>
<rect width="110" height="80" fill="#deb42f"/>
<path d="M26 36c0-20 12-31 30-31 17 0 27 12 27 28 0 14-4 24-4 30l3 17H36l-2-8c-5 1-9-1-9-5l-1-6-4-2c-1-1-1-2 0-3l4-7c-.5-4 1-8 2-13z" fill="#7a63b4"/>
<g clip-path="url(#hc)">
<path d="M24 30C26 12 40 2 57 4c18 1 28 14 27 30-1 10-3 16-6 22-3-8-5-16-9-21-10-3-22-4-33-8-4 0-8 2-12 3z" fill="#4535a6" filter="url(#mb)"/>
<path d="M62 38c5-2 9 1 9 7 0 7-3 13-7 14-3 0-4-4-4-9 0-5 0-10 2-12z" fill="#a78bc0" filter="url(#mb)"/>
<path d="M64 42c3 0 4 3 3 7-1 4-2 6-4 6" stroke="#4535a6" stroke-width="1.200" fill="none"/>
<path d="M56 60c4 6 12 8 22 2l4 20H50z" fill="#5b45ac" filter="url(#mb)"/>
<path d="M27 38c3-1 7-1 10 0M29 43c2-1 5-1 7 0" stroke="#3a2c96" stroke-width="1.400" fill="none"/>
<path d="M24 60c3 0 6 0 9-1" stroke="#3a2c96" stroke-width="1.200" fill="none"/>
</g>
<circle cx="63.500" cy="58.500" r="1.300" fill="none" stroke="#f3e2a0" stroke-width=".6"/>
<path d="M64 76l30 4H58z" fill="#e5b93a"/>
</svg>
<svg class="card" style="left:351.100px;top:851.100px;border-radius:9px 9px 0 0;height:80px" width="110" height="80" viewBox="0 0 110 80">
<defs><filter id="ob" x="-20%" y="-20%" width="140%" height="140%"><feGaussianBlur stdDeviation="5"/></filter><clipPath id="ol"><rect x="0" y="0" width="55.600" height="80"/></clipPath><clipPath id="or"><rect x="55.600" y="0" width="55" height="80"/></clipPath></defs>
<rect width="110" height="80" fill="#4eb0b4"/>
<g clip-path="url(#ol)"><circle cx="55.600" cy="48.800" r="44.500" fill="#f9a210"/><circle cx="55.600" cy="48.800" r="40.500" fill="#fdd070"/><path d="M55.600 48.800L93.5 51.5A38 38 0 0 1 87.8 68.9z" fill="#fba511" stroke="#fdc24f" stroke-width="1.200" stroke-linejoin="round"/><path d="M55.600 48.800L84.7 73.2A38 38 0 0 1 69.8 84.0z" fill="#fba511" stroke="#fdc24f" stroke-width="1.200" stroke-linejoin="round"/><path d="M55.600 48.800L64.8 85.7A38 38 0 0 1 46.4 85.7z" fill="#fba511" stroke="#fdc24f" stroke-width="1.200" stroke-linejoin="round"/><path d="M55.600 48.800L41.4 84.0A38 38 0 0 1 26.5 73.2z" fill="#fba511" stroke="#fdc24f" stroke-width="1.200" stroke-linejoin="round"/><path d="M55.600 48.800L23.4 68.9A38 38 0 0 1 17.7 51.5z" fill="#fba511" stroke="#fdc24f" stroke-width="1.200" stroke-linejoin="round"/><path d="M55.600 48.800L17.7 46.1A38 38 0 0 1 23.4 28.7z" fill="#fba511" stroke="#fdc24f" stroke-width="1.200" stroke-linejoin="round"/><path d="M55.600 48.800L26.5 24.4A38 38 0 0 1 41.4 13.6z" fill="#fba511" stroke="#fdc24f" stroke-width="1.200" stroke-linejoin="round"/><path d="M55.600 48.800L46.4 11.9A38 38 0 0 1 64.8 11.9z" fill="#fba511" stroke="#fdc24f" stroke-width="1.200" stroke-linejoin="round"/><path d="M55.600 48.800L69.8 13.6A38 38 0 0 1 84.7 24.4z" fill="#fba511" stroke="#fdc24f" stroke-width="1.200" stroke-linejoin="round"/><path d="M55.600 48.800L87.8 28.7A38 38 0 0 1 93.5 46.1z" fill="#fba511" stroke="#fdc24f" stroke-width="1.200" stroke-linejoin="round"/><circle cx="55.600" cy="48.800" r="5" fill="#fff2c8"/><ellipse cx="42" cy="39" rx="2" ry="4.500" transform="rotate(-35 42 39)" fill="#f7e6b8"/><ellipse cx="37" cy="45" rx="1.800" ry="4" transform="rotate(-50 37 45)" fill="#f7e6b8"/></g>
<g clip-path="url(#or)"><g filter="url(#ob)"><circle cx="55.600" cy="48.800" r="44" fill="#e8c050"/><circle cx="55.600" cy="50" r="34" fill="#f9a818"/></g></g>
<rect x="55.100" y="0" width="1.100" height="80" fill="#0b0b0d"/>
</svg>
<svg class="card" style="left:471.200px;top:851.100px;border-radius:9px 9px 0 0;height:80px;width:60px" width="60" height="80" viewBox="0 0 60 80">
<defs><filter id="mt" x="0" y="0" width="100%" height="100%"><feTurbulence type="fractalNoise" baseFrequency=".07 .09" numOctaves="3" seed="3"/><feColorMatrix values="0 0 0 0 .55  0 0 0 0 .52  0 0 0 0 .5  1.800 0 0 0 -.75"/></filter></defs>
<rect width="60" height="80" fill="#e9d6c0"/><rect width="60" height="80" filter="url(#mt)"/>
</svg>
<div class="abs" style="left:470px;top:846px;width:53px;height:80px;background:linear-gradient(90deg,rgba(255,255,255,0) 0,rgba(255,255,255,.7) 40%,#fff 68%)"></div>
<svg class="pi" style="left:480.6px;top:899.2px" width="7.200" height="13.400" viewBox="0 0 7.200 13.400" stroke-width="1.900"><path d="M1.200 1L6 6.700 1.200 12.400"/></svg>
<!--FX1-->
</div>
<!--SCROLL-->
<div id="sb">
<svg class="abs" style="left:4.500px;top:9.800px" width="10" height="6" viewBox="0 0 10 6"><path d="M5 .3L9.700 5.700H.3z" fill="#8a8a8a"/></svg>
<div class="abs" style="left:4.200px;top:23.200px;width:10.600px;height:597.500px;border-radius:5.300px;background:#8c8c8c"></div>
<svg class="abs" style="left:4.500px;top:839.200px" width="10" height="6" viewBox="0 0 10 6"><path d="M5 5.700L9.700.3H.3z" fill="#8a8a8a"/></svg>
</div>
<!--CANVAS-->
<div id="cv">
<!-- collapse handle -->
<div class="abs" style="left:524px;top:472.700px;width:32px;height:52.300px;border-radius:16px;background:#fff;box-shadow:0 1px 5px rgba(50,60,90,.2)"></div>
<svg class="ti" style="left:536.300px;top:493.500px" width="7" height="11.400" viewBox="0 0 7 11.400" stroke-width="1.900"><path d="M6 1L1.200 5.700 6 10.400"/></svg>
<div class="abs" style="left:961.750px;top:193px;width:527px;height:583px;background:#fff;box-shadow:0 4px 22px rgba(60,70,100,.13),0 0 0 .5px rgba(60,70,100,.04)"></div>
<svg class="abs" style="left:1015px;top:229.500px" width="428.500" height="428.500" viewBox="0 0 428.500 428.500">
<defs>
<filter id="b8" x="-10%" y="-10%" width="120%" height="120%"><feGaussianBlur stdDeviation="3.600"/></filter>
<filter id="b3" x="-10%" y="-10%" width="120%" height="120%"><feGaussianBlur stdDeviation="2.200"/></filter>
<filter id="b14" x="-10%" y="-10%" width="120%" height="120%"><feGaussianBlur stdDeviation="11"/></filter>
<filter id="tex" x="0" y="0" width="100%" height="100%"><feTurbulence type="fractalNoise" baseFrequency=".28 .34" numOctaves="2" seed="7"/><feColorMatrix values="0 0 0 0 .42  0 0 0 0 .32  0 0 0 0 .16  1.6 1.6 0 0 -1.55"/></filter>
<linearGradient id="paper" x1="0" y1="0" x2="1" y2="1"><stop offset="0" stop-color="#ebd7b3"/><stop offset=".55" stop-color="#e7d3ae"/><stop offset="1" stop-color="#e0cca7"/></linearGradient>
<clipPath id="imgc"><rect width="428.500" height="428.500"/></clipPath>
</defs>
<g clip-path="url(#imgc)">
<rect width="428.500" height="428.500" fill="url(#paper)"/>
<rect width="428.500" height="428.500" filter="url(#tex)" opacity=".32"/>
<path d="M-30 12.500L460 76V-40H-30z" fill="#d49a40" opacity=".7" filter="url(#b8)"/>
<path d="M-30 366.500L270 435.500 -30 470z" fill="#d39838" opacity=".75" filter="url(#b8)"/>
<path d="M-30 10.100L460 73.600V-40H-30z" fill="#45432e" filter="url(#b3)"/>
<path d="M-30 369.600L260 436.400 240 470H-30z" fill="#43422c" filter="url(#b3)"/>
<g font-family="'Liberation Serif','DejaVu Serif',serif" font-weight="400" font-size="42.800" fill="#37332a" stroke="#37332a" stroke-width="1.300" stroke-linejoin="round" text-anchor="middle">
<text x="213" y="138.500" textLength="306" lengthAdjust="spacingAndGlyphs">Hayńś Werntetó</text>
<text x="213" y="183.500" textLength="322" lengthAdjust="spacingAndGlyphs">nnthğea ııeréi iò</text>
<text x="213" y="228" textLength="306" lengthAdjust="spacingAndGlyphs">Sula Mırwapie</text>
<text x="211" y="272.500" textLength="309" lengthAdjust="spacingAndGlyphs">hofsrsterańkaıı</text>
<text x="213" y="318.300" font-size="8.500" font-weight="400" stroke="none" textLength="92" lengthAdjust="spacingAndGlyphs" fill="#5a5142">Ծı 5e%•⊞ⅅΦ ılЛ⊡</text>
</g>
<text x="342.500" y="423.300" font-family="'Liberation Sans','Noto Sans CJK SC',sans-serif" font-size="16.300" font-weight="500" fill="#fff" opacity=".5">可画AI生成</text>
</g>
</svg>
<div class="abs" style="left:1013.500px;top:228px;width:431.300px;height:431.500px;border:2px solid #8b3dff"></div>
<div class="hnd" style="left:1006.300px;top:220.750px"></div>
<div class="hnd" style="left:1435.700px;top:220.750px"></div>
<div class="hnd" style="left:1006.300px;top:650.250px"></div>
<div class="hnd" style="left:1435.700px;top:650.250px"></div>
<div class="hp" style="left:1217px;top:224.700px;width:24px;height:9px"></div>
<div class="hp" style="left:1217.500px;top:654.500px;width:24px;height:9px"></div>
<div class="hp" style="left:1010.200px;top:432.500px;width:9px;height:23.500px"></div>
<div class="hp" style="left:1439px;top:432.500px;width:9px;height:23.500px"></div>
<div class="abs" style="left:1213.900px;top:700.200px;width:31.600px;height:31.600px;border-radius:50%;background:#fff;border:1.200px solid #c5c8d3;box-shadow:0 1px 4px rgba(50,60,90,.14)"></div>
<svg class="ti" style="left:1222.200px;top:708.700px" width="15" height="15" viewBox="0 0 15 15" stroke-width="1.400"><path d="M5.500 13.700C2.500 12.500.8 10 .8 7.300.8 4.500 2.500 2.300 5 1.200M1.300.9h4.200v4.200"/><path d="M9.500 1.300c3 1.200 4.700 3.700 4.700 6.400 0 2.800-1.700 5-4.200 6.100M13.700 14.100H9.500V9.900"/></svg>
<div class="tb" style="left:824.500px;top:80.750px;width:801px;height:50px;border-radius:13px">
<div class="abs" style="left:5.500px;top:5.200px;width:55px;height:39.800px;border-radius:9px;background:#e5e6eb"></div>
<div class="tt" style="left:15.700px">编辑</div>
<div class="tdiv" style="left:70.200px"></div>
<div class="tt" style="left:91px">AI抠图</div>
<div class="tt" style="left:178px">橡皮擦</div>
<div class="tdiv" style="left:249.800px"></div>
<div class="abs" style="left:266px;top:10px;width:30px;height:30px;border-radius:50%;background:#433e24"></div>
<div class="abs" style="left:306px;top:10px;width:30px;height:30px;border-radius:50%;background:#b39c7a"></div>
<svg class="abs" style="left:355px;top:14.800px" width="22.600" height="20.400" viewBox="0 0 22.600 20.400"><rect x="0" y="0" width="22.600" height="1.900" rx=".6" fill="#0e1318"/><rect x="0" y="5.600" width="22.600" height="3.700" rx=".8" fill="#0e1318"/><rect x="0" y="13.600" width="22.600" height="6.600" rx="1" fill="#0e1318"/></svg>
<svg class="ti" style="left:400.500px;top:14.800px" width="21" height="20.500" viewBox="0 0 21 20.500"><path d="M1.500 19.500C1.500 9 9 1.500 19.500 1.500"/></svg>
<div class="tdiv" style="left:440.200px"></div>
<svg class="ti" style="left:458.700px;top:12.500px" width="26" height="25" viewBox="0 0 26 25"><path d="M6.700 1v15.500a2 2 0 0 0 2 2h8.300M21.600 18.500h2.400M1 5.900h16.200a2 2 0 0 1 2 2v16.300"/></svg>
<div class="tt" style="left:505.800px">翻转</div>
<div class="tdiv" style="left:560px"></div>
<svg class="abs" style="left:578.500px;top:12.500px" width="25.700" height="25.300" viewBox="0 0 25.700 25.300"><rect x="0.00" y="0.00" width="5" height="5" rx="1.2" fill="#111"/><rect x="0.00" y="10.10" width="5" height="5" rx="1.2" fill="#111"/><rect x="0.00" y="20.20" width="5" height="5" rx="1.2" fill="#111"/><rect x="5.15" y="5.05" width="5" height="5" rx="1.2" fill="#555"/><rect x="5.15" y="15.15" width="5" height="5" rx="1.2" fill="#555"/><rect x="10.30" y="0.00" width="5" height="5" rx="1.2" fill="#8d8d8d"/><rect x="10.30" y="10.10" width="5" height="5" rx="1.2" fill="#8d8d8d"/><rect x="10.30" y="20.20" width="5" height="5" rx="1.2" fill="#8d8d8d"/><rect x="15.45" y="5.05" width="5" height="5" rx="1.2" fill="#bdbdbd"/><rect x="15.45" y="15.15" width="5" height="5" rx="1.2" fill="#bdbdbd"/><rect x="20.60" y="0.00" width="5" height="5" rx="1.2" fill="#e2e2e2"/><rect x="20.60" y="10.10" width="5" height="5" rx="1.2" fill="#e2e2e2"/><rect x="20.60" y="20.20" width="5" height="5" rx="1.2" fill="#e2e2e2"/></svg>
<div class="tdiv" style="left:620.300px"></div>
<div class="tt" style="left:640.800px">动效</div>
<div class="tdiv" style="left:695px"></div>
<div class="tt" style="left:715.800px">调整图层</div>
</div>
<div class="tb" style="left:1127px;top:155.700px;width:204.500px;height:44px;border-radius:22px"></div>
<svg class="ti" style="left:1136.300px;top:163.800px" width="26.400" height="26.400" viewBox="0 0 24 24"><path d="M15 3.400C13.900 3.100 12.900 3 12 3 6.200 3 1.700 6.700 1.700 11.500c0 3 1.800 5.600 4.600 7.100.2 1.400-.3 2.800-1.100 3.900 2.200-.3 4.100-1.300 5.400-2.700.5.100.9.100 1.400.100 5.800 0 10.300-3.700 10.300-8.400 0-.5 0-.9-.1-1.300"/><path d="M21.300 1.700v6.800M17.900 5.100h6.800"/></svg>
<svg class="ti" style="left:1176.450px;top:162.200px;color:#0e1318" width="26.400" height="26.400" viewBox="0 0 24 24"><rect x="3.700" y="10.600" width="16.600" height="12.200" rx="2.400"/><path d="M6.600 10.500V7.300a5.700 5.700 0 0 1 11.400 0v1.200"/><circle cx="12" cy="15.300" r="1.600" fill="currentColor" stroke="none"/><path d="M12 15.500v3.600"/></svg>
<svg class="ti" style="left:1216.800px;top:164.700px" width="26.400" height="26.400" viewBox="0 0 24 24"><path d="M5.400 16.300H4.800a2.500 2.500 0 0 1-2.500-2.500V5.250a2.500 2.500 0 0 1 2.500-2.500h8a2.500 2.500 0 0 1 2.500 2.500v.3"/><rect x="8.950" y="6.950" width="11.750" height="12.900" rx="2.300"/><path d="M14.800 10.300v6.200M11.700 13.400h6.200"/></svg>
<svg class="ti" style="left:1256.400px;top:163.100px" width="26.400" height="26.400" viewBox="0 0 24 24"><path d="M2.300 5.800h19.400M8.400 5.500V4.300a2.200 2.200 0 0 1 2.200-2.200h2.800a2.200 2.200 0 0 1 2.200 2.200v1.200M4.500 6.200v13.300a3 3 0 0 0 3 3h9a3 3 0 0 0 3-3V6.200M9.800 10.200v8M14.200 10.200v8"/></svg>
<svg class="abs" style="left:1298px;top:174.800px" width="24" height="5" viewBox="0 0 24 5"><circle cx="2.600" cy="2.500" r="2.100" fill="#0e1318"/><circle cx="11.500" cy="2.500" r="2.100" fill="#0e1318"/><circle cx="20.400" cy="2.500" r="2.100" fill="#0e1318"/></svg>
<svg class="gi" style="left:1370.400px;top:157.500px;color:#5b5e66" width="22" height="22" viewBox="0 0 24 24" stroke-width="1.750"><rect x="3.700" y="10.600" width="16.600" height="12.200" rx="2.400"/><path d="M6.600 10.500V7.300a5.700 5.700 0 0 1 11.400 0v1.200"/><circle cx="12" cy="15.300" r="1.600" fill="currentColor" stroke="none"/><path d="M12 15.500v3.600"/></svg>
<svg class="gi" style="left:1416.100px;top:160.100px" width="22" height="22" viewBox="0 0 24 24" stroke-width="1.750"><path d="M5.400 16.300H4.800a2.500 2.500 0 0 1-2.500-2.500V5.250a2.500 2.500 0 0 1 2.500-2.500h8a2.500 2.500 0 0 1 2.500 2.500v.3"/><rect x="8.950" y="6.950" width="11.750" height="12.900" rx="2.300"/><path d="M14.800 10.300v6.200M11.700 13.400h6.200"/></svg>
<svg class="gi" style="left:1461.500px;top:157.300px" width="22" height="22" viewBox="0 0 24 24" stroke-width="1.750"><path d="M9.500 6H4.700A2.700 2.700 0 0 0 2 8.700v11A2.700 2.700 0 0 0 4.700 22.400h11a2.700 2.700 0 0 0 2.700-2.700V16M14 1.500v13M7.500 8h13" /></svg>

<div class="abs" style="left:961.700px;top:806.200px;width:527.400px;height:46.900px;border-radius:9px;border:1px solid #6d7079"></div>
<div class="abs" style="left:1447px;top:807px;width:1px;height:45px;background:#6d7079"></div>
<div class="abs" style="left:1162.300px;top:817.700px;font-size:17.600px;font-weight:700;line-height:24px;white-space:nowrap;color:#23262c;word-spacing:2.500px">+ 添加页面</div>
<svg class="ti" style="left:1462.200px;top:826px" width="11" height="7.500" viewBox="0 0 11 7.500" stroke-width="2"><path d="M1.200 1.500L5.500 5.800 9.800 1.500" stroke="#23262c"/></svg>
<svg class="gi" style="left:559.500px;top:887px" width="26.400" height="26.400" viewBox="0 0 24 24" stroke="#3c3f46"><path d="M2 6.500h15M2 11.500h8.500M2 16.500h5.500"/><path d="M10.300 20.700l.9-3.600 8.200-8.200a1.700 1.700 0 0 1 2.400 0l.3.300a1.700 1.700 0 0 1 0 2.400l-8.200 8.200z" stroke-width="1.500"/></svg>
<div class="bt" style="left:590.800px;font-weight:700">备注</div>
<div class="abs" style="left:1362.400px;top:897.700px;width:199px;height:4px;border-radius:2px;background:#d9dbe1"></div>
<div class="abs" style="left:1362.400px;top:897.700px;width:46px;height:4px;border-radius:2px;background:#a7a9b2"></div>
<div class="abs" style="left:1362.400px;top:897.700px;width:4px;height:4px;border-radius:2px;background:#6d7079"></div>
<div class="abs" style="left:1557.400px;top:897.700px;width:4px;height:4px;border-radius:2px;background:#8d9099"></div>
<div class="abs" style="left:1396.300px;top:887.500px;width:24.600px;height:24.600px;border-radius:50%;background:#fff;box-shadow:0 0 0 1px rgba(64,79,109,.12),0 2px 5px rgba(50,60,90,.25)"></div>
<div class="bt" style="left:1580.800px;letter-spacing:.2px">21%</div>
<svg class="gi" style="left:1642.800px;top:886.600px" width="26.400" height="26.400" viewBox="0 0 24 24" stroke="#3c3f46"><rect x="2.200" y="2.700" width="19.600" height="11" rx="1.500"/><rect x="2.200" y="17.300" width="19.600" height="4.500" rx="1.200"/><path d="M8.700 17.500v4M15.300 17.500v4"/></svg>
<div class="bt" style="left:1676px">页面</div>
<div class="bt" style="left:1734.500px;letter-spacing:1.100px">1/1</div>
<svg class="gi" style="left:1781.600px;top:886.600px" width="26.400" height="26.400" viewBox="0 0 24 24" stroke="#3c3f46"><rect x="3.200" y="3.300" width="7" height="7" rx="1.500"/><rect x="14" y="3.300" width="7" height="7" rx="1.500"/><rect x="3.200" y="14" width="7" height="7" rx="1.500"/><rect x="14" y="14" width="7" height="7" rx="1.500"/></svg>
<svg class="gi" style="left:1825px;top:886.800px" width="26.400" height="26.400" viewBox="0 0 24 24" stroke="#3c3f46"><path d="M14.500 3.200h6.300v6.300M20.500 3.500l-6.700 6.700M9.500 20.800H3.200v-6.300M3.500 20.500l6.700-6.700"/></svg>
<svg class="gi" style="left:1866.800px;top:885.800px" width="26.400" height="26.400" viewBox="0 0 24 24" stroke="#3c3f46"><path d="M12 1.500v3.300M9.700 1.500h4.600"/><path d="M5.300 5h13.400a3 3 0 0 1 3 3v8.500a3 3 0 0 1-3 3h-1.200l-2.300 2.700c-.5.500-1.300.5-1.700 0l-1.500-2.700H5.300a3 3 0 0 1-3-3V8a3 3 0 0 1 3-3z"/><path d="M.8 10.500v4M23.200 10.500v4M9 10.500v3.200M15 10.500v3.200"/></svg>

</div>
</div>
<div id="winborder"></div>
</body>
</html>
